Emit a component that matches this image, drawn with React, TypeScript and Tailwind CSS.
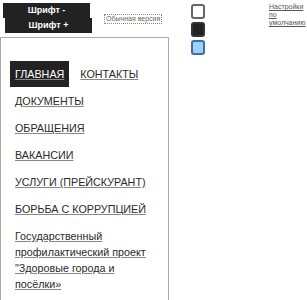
import React from 'react';

const menu = [
    'ГЛАВНАЯ',
    'КОНТАКТЫ',
    'ДОКУМЕНТЫ',
    'ОБРАЩЕНИЯ',
    'ВАКАНСИИ',
    'УСЛУГИ (ПРЕЙСКУРАНТ)',
    'БОРЬБА С КОРРУПЦИЕЙ',
    'Государственный профилактический проект "Здоровые города и посёлки»',
];

const App: React.FC = () => {
    return (
        <div className="bg-white w-[307px] h-[300px] overflow-hidden font-['Liberation_Sans',Arial,sans-serif]">
            {/* accessibility toolbar */}
            <div className="h-[37px] grid grid-cols-[104px_87px_78px_38px] items-start">
                <div className="flex flex-col pt-[3px] pl-[3px]">
                    <button className="w-[87px] h-[15px] bg-[#222] text-white text-[9px] font-bold leading-[15px]">
                        Шрифт -
                    </button>
                    <button className="w-[87px] h-[15px] ml-[2px] bg-[#222] text-white text-[9px] font-bold leading-[15px]">
                        Шрифт +
                    </button>
                </div>
                <div className="pt-[4px]">
                    <a className="inline-block px-[1px] border border-dotted border-[#888] text-[#666] text-[7px] leading-[8px] whitespace-nowrap">
                        Обычная версия
                    </a>
                </div>
                <div className="pt-[4px] flex flex-col gap-[3px]">
                    <div className="w-[14px] h-[15px] rounded-[3px] border-2 border-[#666] bg-white"></div>
                    <div className="w-[14px] h-[15px] rounded-[3px] border-2 border-[#333] bg-[#222]"></div>
                    <div className="w-[14px] h-[15px] rounded-[3px] border-2 border-[#3b6fa8] bg-[#9fcfff]"></div>
                </div>
                <a className="pt-[3px] text-[7px] leading-[8px] text-[#555] underline whitespace-nowrap">
                    Настройки
                    <br />
                    по
                    <br />
                    умолчанию
                </a>
            </div>

            {/* navigation panel */}
            <div className="w-[169px] h-[400px] border-t border-l border-r border-[#aaa] pl-[9px] pr-[8px] pt-[23px]">
                <ul className="flex flex-wrap gap-x-[6px] gap-y-[1px] text-[10.75px] leading-[16px]">
                    {menu.map((item, i) => (
                        <li key={item}>
                            <a
                                className={`block px-[5px] py-[5px] underline decoration-[#888] ${
                                    i === 0 ? 'bg-[#222] text-white' : 'text-[#2a2a2a]'
                                }`}
                            >
                                {item}
                            </a>
                        </li>
                    ))}
                </ul>
            </div>
        </div>
    );
};

export default App;
